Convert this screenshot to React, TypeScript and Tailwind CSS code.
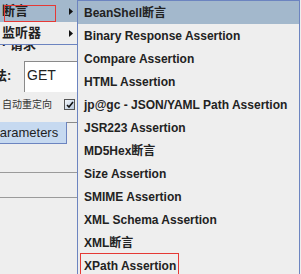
import React from 'react';

// JMeter-style cascading popup menu over a partly hidden form.

const items = [
  'BeanShell断言',
  'Binary Response Assertion',
  'Compare Assertion',
  'HTML Assertion',
  'jp@gc - JSON/YAML Path Assertion',
  'JSR223 Assertion',
  'MD5Hex断言',
  'Size Assertion',
  'SMIME Assertion',
  'XML Schema Assertion',
  'XML断言',
  'XPath Assertion',
];

const font = { fontFamily: '"Liberation Sans", "Noto Sans CJK SC", sans-serif' };

function Arrow() {
  return (
    <svg width="4" height="7" viewBox="0 0 4 7" className="shrink-0">
      <path d="M0 0 L4 3.5 L0 7 Z" fill="#111" />
    </svg>
  );
}

export default function App() {
  return (
    <div
      className="relative w-[301px] h-[274px] overflow-hidden bg-[#eeeeee] text-[#222]"
      style={font}
    >
      {/* ── Background form (mostly hidden by the popups) ── */}
      <div className="flex flex-col">
        <div className="h-[38px]" />
        <div className="h-[16px] pl-[2px] text-[13px] leading-[14px] font-bold">· 请求</div>
        <div className="h-[7px]" />
        <div className="flex items-start h-[31px]">
          <span className="-ml-[19px] w-[43px] pt-[5px] text-[13px] font-bold">方法:</span>
          <div className="w-[140px] h-[31px] bg-white border-l border-t border-[#8a8a8a] pt-[4px] pl-[2px] text-[14px] leading-[18px]">
            GET
          </div>
        </div>
        <div className="h-[6px]" />
        <div className="flex items-center h-[12px]">
          <span className="pl-[2px] w-[64px] text-[10px] text-[#333]">自动重定向</span>
          <div className="w-[11px] h-[11px] border border-[#555] bg-gradient-to-br from-[#f4f7fb] to-[#b8c8dc] flex items-center justify-center">
            <svg width="8" height="7" viewBox="0 0 8 7">
              <path d="M1 4 L3 6 L7 1" stroke="#111" strokeWidth="1.6" fill="none" />
            </svg>
          </div>
        </div>
        <div className="h-[12px]" />
        <div className="flex items-end h-[22px]">
          <div className="-ml-[10px] w-[77px] h-[22px] bg-[#c6d9f0] border-r border-b border-[#6c84c0] flex items-center pl-[1px] text-[13px] text-[#1e1e1e]">
            Parameters
          </div>
          <div className="w-[12px] h-[22px] border-t border-[#8a8a8a]" />
        </div>
        <div className="h-[28px]" />
        <div className="w-[80px] border-t border-[#9a9a9a]" />
        <div className="h-[24px]" />
        <div className="w-[80px] border-t border-[#9a9a9a]" />
      </div>

      {/* ── Parent popup menu ── */}
      <div className="absolute -left-[2px] -top-[1px] w-[80px] bg-[#eeeeee] border border-[#6c84c0] text-[13px] font-bold">
        <div className="h-[22px] bg-[#a3b8cc] flex items-center justify-between pl-[3px] pr-[4px]">
          <span>断言</span>
          <Arrow />
        </div>
        <div className="h-[22px] flex items-center justify-between pl-[3px] pr-[4px]">
          <span>监听器</span>
          <Arrow />
        </div>
      </div>
      <div className="absolute left-[4px] top-[5px] w-[52px] h-[17px] border border-[#e53935]" />

      {/* ── Assertion submenu ── */}
      <div className="absolute left-[77px] top-0 w-[223px] bg-[#eeeeee] border border-[#6c84c0] text-[12px] font-bold">
        {items.map((label, i) => (
          <div
            key={label}
            className={`h-[23px] flex items-center pl-[6px] ${i === 0 ? 'bg-[#a3b8cc]' : ''}`}
          >
            {label}
          </div>
        ))}
      </div>
      <div className="absolute left-[80px] top-[253px] w-[99px] h-[30px] border border-[#e53935]" />
    </div>
  );
}
